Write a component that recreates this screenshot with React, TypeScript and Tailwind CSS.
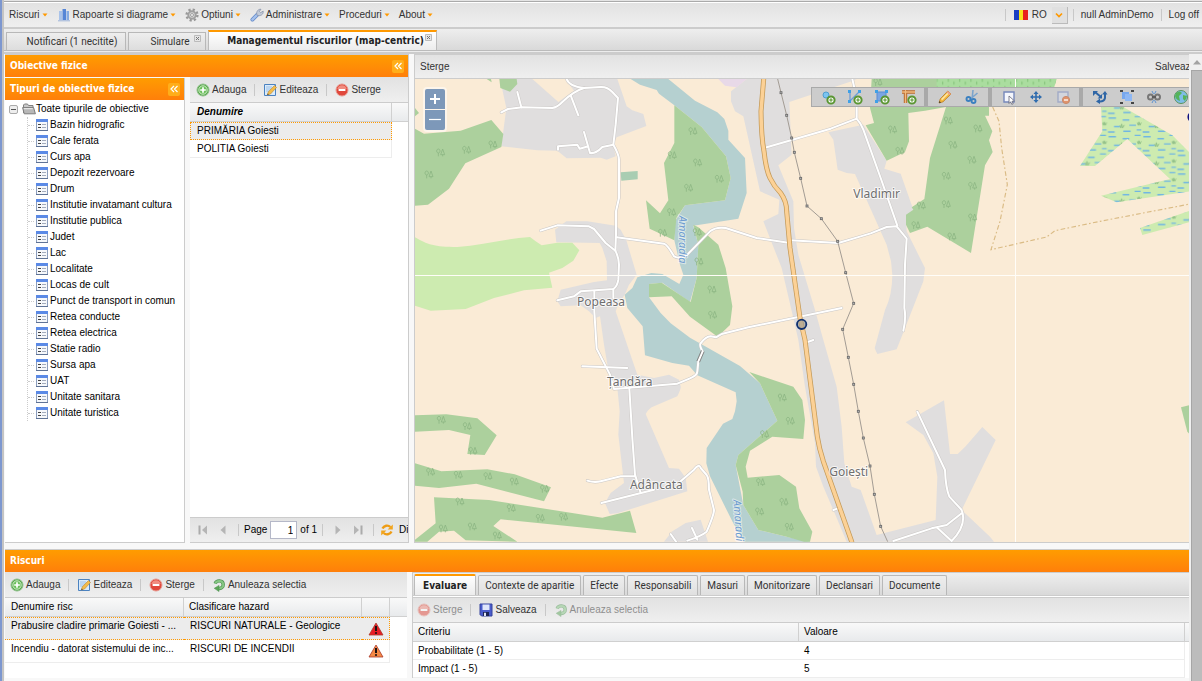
import { useState, type ReactNode } from 'react';

const TREE_ITEMS = [
  'Bazin hidrografic',
  'Cale ferata',
  'Curs apa',
  'Depozit rezervoare',
  'Drum',
  'Institutie invatamant cultura',
  'Institutie publica',
  'Judet',
  'Lac',
  'Localitate',
  'Locas de cult',
  'Punct de transport in comun',
  'Retea conducte',
  'Retea electrica',
  'Statie radio',
  'Sursa apa',
  'UAT',
  'Unitate sanitara',
  'Unitate turistica',
];

const DETAIL_TABS = [
  'Evaluare',
  'Contexte de aparitie',
  'Efecte',
  'Responsabili',
  'Masuri',
  'Monitorizare',
  'Declansari',
  'Documente',
];

const RISKS = [
  { name: 'Prabusire cladire primarie Goiesti - ...', hazard: 'RISCURI NATURALE - Geologice', color: '#e81c24' },
  { name: 'Incendiu - datorat sistemului de inc...', hazard: 'RISCURI DE INCENDII', color: '#f58a45' },
];

const CRITERIA = [
  { name: 'Probabilitate (1 - 5)', value: '4' },
  { name: 'Impact (1 - 5)', value: '5' },
];

/* ---------- icons ---------- */

function AddIcon() {
  return (
    <svg className="h-3.5 w-3.5" viewBox="0 0 14 14">
      <circle cx="7" cy="7" r="6" fill="#5bab4f" stroke="#8fbf8a" />
      <circle cx="7" cy="7" r="4.2" fill="#6cc05c" stroke="#e6f5e2" strokeWidth=".8" />
      <path d="M7 4.2v5.6M4.2 7h5.6" stroke="#fff" strokeWidth="1.7" />
    </svg>
  );
}

function RemoveIcon() {
  return (
    <svg className="h-3.5 w-3.5" viewBox="0 0 14 14">
      <circle cx="7" cy="7" r="6" fill="#e0483c" stroke="#e79a90" />
      <path d="M2.3 6a4.8 4.8 0 0 1 9.4 0z" fill="#f08d80" />
      <path d="M3.6 7h6.8" stroke="#fff" strokeWidth="2" />
    </svg>
  );
}

function EditIcon() {
  return (
    <svg className="h-3.5 w-3.5" viewBox="0 0 14 14">
      <path d="M1.5 1.5h11v11h-11z" fill="#d9eafa" stroke="#4b82c0" />
      <path d="M3 4h6M3 6h5M3 8h3" stroke="#9cc0e6" />
      <path d="M11.5 2.5 13.5 4.5 7.5 11l-3.2 1 1-3.2z" fill="#f4bc4a" stroke="#b58636" strokeWidth=".6" />
      <path d="m4.3 12 .5-1.5 1 1z" fill="#333" />
    </svg>
  );
}

function UndoIcon() {
  return (
    <svg className="h-3.5 w-3.5" viewBox="0 0 14 14">
      <path d="M3.2 5.5C4.5 2 10.8 1.8 11.2 6.3c.3 3-2.4 4.5-5.2 4.2" fill="none" stroke="#4c9150" strokeWidth="3.4" />
      <path d="M3.2 5.5C4.5 2 10.8 1.8 11.2 6.3c.3 3-2.4 4.5-5.2 4.2" fill="none" stroke="#86c784" strokeWidth="2" />
      <path d="M7 7.4v6.2L2.2 10.3z" fill="#5aa556" stroke="#4c9150" strokeWidth=".5" />
    </svg>
  );
}

function SaveIcon() {
  return (
    <svg className="h-3.5 w-3.5" viewBox="0 0 14 14">
      <path d="M1 1h12v12H2.5L1 11.5z" fill="#4a5ccc" stroke="#34439c" />
      <path d="M3.5 1.5h7V7h-7z" fill="#dfe6fb" />
      <path d="M4 9h6v4H4z" fill="#1c2454" />
      <path d="M5 9.8h2V13H5z" fill="#dfe4f5" />
    </svg>
  );
}

function FormIcon() {
  return (
    <svg className="h-3 w-3" viewBox="0 0 12 12">
      <path d="M.5.5h11v11H.5z" fill="#f6f8fb" stroke="#8b9dbd" />
      <path d="M0 0h12v3H0z" fill="#5b8ae6" />
      <path d="M0 11.5h12" stroke="#5f7396" />
      <path d="M2 5.5h3M2 8.5h3" stroke="#444" />
      <path d="M6 5.5h4M6 8.5h4" stroke="#a3acbd" />
    </svg>
  );
}

function FolderIcon() {
  return (
    <svg className="h-3 w-3.5" viewBox="0 0 14 12">
      <path d="M1.5 10V2l1-1h3l1 1.5H11V5" fill="#c9c9c9" stroke="#808080" />
      <path d="M.6 4.6h11l1.8 6.2H2.2z" fill="#b8b8b8" stroke="#7c7c7c" />
      <path d="M1.8 5.7h9" stroke="#f0f0f0" />
    </svg>
  );
}

function WarningIcon({ color }: { color: string }) {
  return (
    <svg className="mx-auto h-3.5 w-4" viewBox="0 0 16 14">
      <path d="M8 1 15 13H1z" fill={color} stroke="#a83a2c" strokeWidth=".8" strokeLinejoin="round" />
      <path d="M8 4v5" stroke="#1c1010" strokeWidth="2" />
      <circle cx="8" cy="11" r="1.1" fill="#1c1010" />
    </svg>
  );
}

function ChartIcon() {
  return (
    <svg className="h-3.5 w-3.5" viewBox="0 0 14 14">
      <path d="M2 3h3v9H2z" fill="#a9c3ea" />
      <path d="M5.5 1H9v11H5.5z" fill="#5686d6" />
      <path d="M9.5 3H12v9H9.5z" fill="#86abe2" />
      <path d="M1 12.8h12" stroke="#9db4da" />
    </svg>
  );
}

function GearIcon() {
  return (
    <svg className="h-3.5 w-3.5" viewBox="0 0 14 14">
      <circle cx="7" cy="7" r="5.4" fill="none" stroke="#989898" strokeWidth="2.4" strokeDasharray="2.2 2.04" />
      <circle cx="7" cy="7" r="3.7" fill="#d8d8d8" stroke="#a0a0a0" strokeWidth="2" />
      <circle cx="7" cy="7" r="1.5" fill="#f2f2f2" stroke="#888" strokeWidth=".7" />
    </svg>
  );
}

function WrenchIcon() {
  return (
    <svg className="h-3.5 w-3.5" viewBox="0 0 14 14">
      <path d="M2.4 11.6 7.6 6.4" stroke="#5f86c6" strokeWidth="3.8" strokeLinecap="round" />
      <path d="M2.4 11.6 7.6 6.4" stroke="#a4c0ec" strokeWidth="2.4" strokeLinecap="round" />
      <path d="M7 7.2C5.8 3.8 8 1 11 1.2L9.4 3.4l1.2 1.3 2.6-1.6c.4 3.2-2.6 5.6-6.2 4.1z" fill="#c3cbd8" stroke="#7f8da6" strokeWidth=".7" />
    </svg>
  );
}

function RefreshIcon() {
  return (
    <svg className="h-3.5 w-3.5" viewBox="0 0 14 14">
      <path d="M2.5 5.6C4 2.4 8 1.6 10.4 4M11.5 8.4C10 11.6 6 12.4 3.6 10" fill="none" stroke="#ee9c14" strokeWidth="2.4" />
      <path d="M12.8 1.6v5H7.6zM1.2 12.4v-5h5.2z" fill="#f2a51e" />
    </svg>
  );
}

function Caret() {
  return (
    <svg className="h-1 w-1.5" viewBox="0 0 6 4">
      <path d="M.5.5h5L3 3.5z" fill="#f90" />
    </svg>
  );
}

function PageArrow({ flip, bar }: { flip?: boolean; bar?: boolean }) {
  return (
    <svg className={flip ? 'h-2.5 w-2.5 rotate-180' : 'h-2.5 w-2.5'} viewBox="0 0 10 10">
      <path d="M7.5.5v9L2.5 5z" fill="#b5b5b5" transform={bar ? 'translate(1.5 0)' : undefined} />
      {bar && <path d="M1.5.5v9" stroke="#ababab" strokeWidth="2" />}
    </svg>
  );
}

/* ---------- small building blocks ---------- */

function Separator() {
  return <span className="h-3 w-px shrink-0 bg-[#c8c8c8]" />;
}

function ToolButton({ icon, children, disabled }: { icon?: ReactNode; children: ReactNode; disabled?: boolean }) {
  return (
    <button disabled={disabled} className="flex items-center gap-0.5 whitespace-nowrap disabled:opacity-50">
      {icon}
      {children}
    </button>
  );
}

function Bar({ children, className = '' }: { children: ReactNode; className?: string }) {
  return (
    <div className={`flex h-[26px] shrink-0 items-center overflow-hidden bg-linear-to-b from-[#e2e2e2] to-[#efefef] text-[#333] ${className}`}>
      {children}
    </div>
  );
}

function OrangeHeader({ title, collapsible = true }: { title: string; collapsible?: boolean }) {
  return (
    <div className="flex h-[22px] shrink-0 items-center justify-between bg-linear-to-b from-[#ff9c00] to-[#ff7f0a] pr-1 pl-[5px] font-['DejaVu_Sans_Condensed','DejaVu_Sans',sans-serif] text-[10px] font-bold text-white">
      <h2>{title}</h2>
      {collapsible && (
        <button aria-label="Restrange" className="flex h-[13px] w-3 items-center justify-center rounded-xs bg-[#ffae1a]">
          <svg className="h-2 w-2" viewBox="0 0 8 8">
            <path d="M4 1 1 4l3 3M7.5 1l-3 3 3 3" fill="none" stroke="#fff" strokeWidth="1.2" />
          </svg>
        </button>
      )}
    </div>
  );
}

function MenuItem({ icon, label }: { icon?: ReactNode; label: string }) {
  return (
    <button className="flex items-center gap-0.5 whitespace-nowrap">
      {icon}
      {label}
      <Caret />
    </button>
  );
}

function MainTab({ label, active, closable, className = '' }: { label: string; active?: boolean; closable?: boolean; className?: string }) {
  return (
    <button
      role="tab"
      aria-selected={!!active}
      className={`relative flex items-center justify-center whitespace-nowrap border-x border-t ${
        active
          ? "h-5 border-[#bbb] border-t-2 border-t-[#f90] bg-linear-to-b from-white to-[#ececec] font-['DejaVu_Sans_Condensed','DejaVu_Sans',sans-serif] font-bold text-[#222]"
          : 'h-[18px] border-[#b8b8b8] bg-linear-to-b from-[#eee] to-[#ddd] text-[#333]'
      } ${className}`}
    >
      {label}
      {closable && (
        <svg className="absolute top-0.5 right-1 h-[7px] w-[7px]" viewBox="0 0 7 7">
          <path d="M.5.5h6v6h-6z" fill="#e6e6e6" stroke="#bbb" />
          <path d="m2 2 3 3M5 2 2 5" stroke="#777" />
        </svg>
      )}
    </button>
  );
}

/* ---------- map ---------- */

const TREES = [
  [80, 223], [158, 215], [237, 199], [45, 289], [837, 159], [775, 231], [851, 253], [824, 329], [916, 302], [773, 402],
  [746, 464], [850, 462], [894, 634], [896, 710], [855, 550], [1105, 958], [1129, 1028], [1052, 1068], [1040, 1212],
  [1037, 1300], [1110, 1271], [1126, 1346], [1436, 154], [1458, 218], [1603, 127], [1617, 200], [1597, 293], [1597, 378],
  [1522, 382], [1506, 441], [1614, 475], [1692, 151], [1674, 245], [1676, 323], [1676, 418], [82, 1025], [160, 1044],
  [177, 1118], [50, 1181], [133, 1190], [222, 1194], [301, 1210], [392, 1232], [138, 1270], [292, 1290], [379, 1319],
  [449, 1316], [88, 1351], [175, 1345], [250, 1372], [1392, 12],
];

const PYLONS = [
  [1101, 44], [1118, 112], [1133, 180], [1141, 223], [1160, 301], [1179, 384], [1222, 422], [1271, 490], [1295, 584],
  [1319, 676], [1286, 754], [1303, 838], [1319, 919], [1333, 1000], [1348, 1080], [1368, 1164], [1381, 1249], [1400, 1345],
];

const ROADS = [
  'M262 103 282 93 325 88 415 90Q430 88 445 72 478 40 510 30L560 27Q580 26 595 42L612 60 605 140 598 200 Q615 230 615 245L615 360 606 400 606 470 604 518Q615 540 615 560L613 605Q610 625 598 633L500 640 480 655 430 667',
  'M458 3Q465 25 510 30M310 42 322 88M470 52 493 112M432 215V205L490 200 497 212 523 205M510 162 528 225Q545 228 565 207L598 200',
  'M380 458 430 442 525 445 540 453 575 495 604 518M608 478 750 497Q760 500 780 535 800 545 820 530L888 460Q905 446 935 450L1028 480 1123 494',
  'M1128 487 1273 495 1330 478 1370 466 1418 447 1448 445 1478 482 1473 560 1471 690Q1477 720 1468 758',
  'M1058 208 1250 152 1328 122M1315 3 1328 60V122Q1340 135 1348 155L1400 300 1450 443',
  'M541 640V700L548 812 588 890 600 933 700 925 790 917 828 901 Q850 893 850 880L853 851 866 821Q855 800 860 796 875 776 890 775L906 778 923 768 1003 748 1283 690',
  'M505 865 640 870M646 931 655 1080 663 1190 680 1245M520 1208Q540 1215 560 1210L620 1195H663M562 1275 720 1235',
  'M800 1210 840 1175Q855 1155 860 1170L878 1191Q885 1200 885 1235L900 1296Q900 1310 878 1361 860 1375 820 1388M770 1368 786 1391M834 1350 850 1385',
  'M1510 1001 1593 1176Q1595 1230 1606 1256L1643 1296Q1660 1340 1613 1389L1568 1348M1438 1389 1553 1351 1598 1341 1643 1306',
  'M1176 794 1198 786M1258 1296 1270 1292M598 633V660',
];

const MAIN_ROAD =
  'M1049 3 1041 100Q1042 180 1050 220 1056 275 1068 300 1080 325 1100 345 1118 370 1118 400L1128 510 1158 720 1173 786 1210 1076Q1215 1110 1228 1150L1313 1391';

function RegionMap() {
  return (
    <svg className="absolute inset-0 h-full w-full" viewBox="3 3 2322 1389" preserveAspectRatio="xMinYMin slice" role="img" aria-label="Harta">
      <defs>
        <pattern id="marsh" width="104" height="56" patternUnits="userSpaceOnUse">
          <path d="M4 8h22M46 14h20M82 4h18M20 34h18M66 30h20M2 50h20M48 48h22M88 44h14" stroke="#6fb5e4" strokeWidth="4" />
          <path d="M38 30l3 8 2-12 3 12 5-9M90 22l3 8 2-10 3 10 4-8" fill="none" stroke="#86b880" strokeWidth="2.5" />
        </pattern>
        <pattern id="ticks" width="34" height="22" patternUnits="userSpaceOnUse">
          <path d="M5 2v10M22 10v10" stroke="#82c178" strokeWidth="3" />
        </pattern>
      </defs>
      <path d="M0 0H4000V3000H0z" fill="#faebd6" />

      {/* built-up areas */}
      <g fill="#e0dede">
        <path d="M258 3 277 90 262 205 370 217 430 218 458 241 560 239 578 245 605 235 598 200 608 178 697 144 688 108 655 97 638 85 610 3z" />
        <path d="M423 455 427 493 557 495 565 510 578 550 579 607 540 612 440 635 430 670 440 685 500 682 525 700 545 720 558 715 570 800 582 870 610 930 617 1000 613 1070 630 1215 590 1245 573 1275 587 1308 610 1306 820 1240 815 1200 795 1172 765 1170 695 1008Q705 990 720 985L790 955Q802 930 800 925L795 905 765 890 720 900 670 890 605 700 612 680 632 650 645 620 668 590 637 487 620 455 605 443 520 430H457z" />
        <path d="M750 1391 775 1360 815 1335 860 1325 882 1391z" />
        <path d="M998 3 951 40V70L963 100 988 115 1038 340 1096 365 1093 408 1048 430 1103 570 1138 720 1153 786 1173 926 1203 1096 1206 1166 1228 1226 1258 1296 1298 1391H1740L1728 1376 1643 1296 1745 1086 1705 1047 1655 1105 1631 1128H1608L1590 967 1475 1033 1528 1071 1558 1126 1570 1196 1565 1326 1388 1371 1340 1236 1313 1226 1291 1156 1283 1046 1268 926 1228 786 1203 696 1153 530 1140 450 1138 370 1093 262 1133 230 1126 72 1313 10 1328 3z" />
        <path d="M1243 163 1348 140 1418 248 1411 272 1460 287 1498 395 1476 415 1478 460 1533 570 1528 610 1485 720 1448 814 1390 828 1382 811 1413 696Q1435 650 1435 590L1431 550 1418 500 1323 288 1298 285 1271 275 1258 185z" />
      </g>
      <path d="M355 3 433 72 480 38 455 3z" fill="#faebd6" />
      <path d="M913 3 933 23 968 28 998 3z" fill="#e8d9e8" />
      <path d="M620 283 671 279V304L622 308z" fill="#a9cdb2" />

      {/* meadow, water, woods */}
      <path d="M3 478C40 500 60 507 130 507 200 502 270 482 348 477L365 490 383 502 430 494H475L496 517 478 548 445 570 405 584 415 629 330 637 240 660 155 693 50 698 3 683z" fill="#cdebb0" />
      <path d="M650 3 678 20 728 36 735 47 781 82 863 147 936 235 950 300 933 367 813 382 783 430 781 487 798 560 808 590 796 618 745 588 712 585 670 598 655 630 632 650 640 690 686 745 693 832 775 855 825 863 850 892 965 943 968 970 963 1000 955 1023 927 1037 878 1110 877 1156 888 1195 935 1290 958 1336 990 1391H1190L1118 1376 1033 1356 988 1281 965 1161 973 1131 1090 1028 1038 916 978 864 828 779 770 736 740 705 705 658V618L745 614 828 672 848 600 853 500 838 443 973 422 998 345 993 240 943 185V158L931 123 910 103 843 68 763 3z" fill="#b5d0d0" />
      <g fill="#acd09d">
        <path d="M256 3 259 30 288 41 310 18 308 3zM218 3 233 13 231 3zM3 90 15 105 3 115z" />
        <path d="M3 152 30 167 140 158 232 126 268 168 262 207 154 256 105 332 42 380 3 383z" />
        <path d="M781 82 863 147 936 235 950 300 933 367 813 382 787 420 781 487 707 452 696 367 738 406 763 367 750 255 781 195z" />
        <path d="M838 440 853 448 913 500 935 570 955 685 948 741 911 776 828 716 773 655 705 658V618L743 614 830 672 848 600 853 500z" />
        <path d="M1006 882 1138 926 1165 966 1173 1026 1168 1083 1075 1076 1008 1118 995 1166 1001 1199 1096 1191 1146 1226 1156 1291 1195 1361 1188 1391H1170L1118 1376 1033 1356 988 1281 986 1241 965 1161 973 1131 1090 1028 1038 916z" />
        <path d="M1373 3 1368 90 1380 135 1355 142 1418 248 1473 222 1485 190 1483 105 1533 98 1596 87 1548 240 1531 363 1493 388 1498 395 1476 410V440L1488 465 1540 446 1671 525 1713 262 1736 222 1725 187 1735 160 1713 113H1725V3z" />
        <path d="M3 1012 97 1009 190 1021 248 1072 212 1131 160 1128 169 1071 105 1056 3 1061zM3 1156 82 1180 220 1174 302 1189 411 1228 390 1270 187 1217 75 1230 3 1223z" />
        <path d="M60 1258 225 1266 565 1319 648 1298 667 1365 260 1324 238 1344 310 1391 155 1387 120 1358 75 1361 40 1391H3V1385L65 1336z" />
        <path d="M2301 988 2328 981V1070L2320 1061z" />
      </g>
      <path d="M1568 3H1928L1920 30H1568z" fill="#aadd9f" />
      <path d="M1568 3H1928L1920 30H1568z" fill="url(#ticks)" />
      {['#cdebb0', 'url(#marsh)'].map((fill) => (
        <path
          key={fill}
          fill={fill}
          d="M2061 87H2128L2275 172 2328 225V340L2108 373 2061 353 2268 303 2140 183 2043 264H1998L2065 160zM2178 450 2328 398V432L2185 471z"
        />
      ))}
      <g fill="none" stroke="#8cb583" strokeWidth="2.4">
        {TREES.map(([x, y]) => (
          <path key={`${x}-${y}`} transform={`translate(${x} ${y})`} d="M-7 12V2M-7 2a5 6 0 1 1 .1 0M6 12V7M0 7 6-10 12 7z" />
        ))}
      </g>

      <path d="M1736 87 1755 130 1763 210 1780 320 1758 430 1731 515 1898 477 1923 458 2058 430 2328 378" fill="none" stroke="#dabb85" strokeWidth="3.5" strokeDasharray="14 7 5 7" />

      {/* roads */}
      <g fill="none" strokeLinejoin="round" strokeLinecap="round">
        {ROADS.map((d) => <path key={d} d={d} stroke="#cbc8c6" strokeWidth="9" />)}
        {ROADS.map((d) => <path key={d} d={d} stroke="#fff" strokeWidth="6" />)}
        <path d="M849 848 862 818M857 852 870 822" stroke="#777" strokeWidth="2.5" />
        <path d={MAIN_ROAD} stroke="#c49a58" strokeWidth="15" />
        <path d={MAIN_ROAD} stroke="#fcd196" strokeWidth="10.5" />
      </g>
      <polyline points={`1091,3 ${PYLONS.map((p) => p.join(',')).join(' ')} 1421,1391`} fill="none" stroke="#a39c94" strokeWidth="3" />
      {PYLONS.map(([x, y]) => (
        <rect key={y} x={x - 3} y={y - 3} width="6" height="6" fill="#bbb" stroke="#6b6b6b" strokeWidth="2.5" />
      ))}

      {/* tile seams */}
      <path d="M3 592.5H2400M1804.5 3V1400" stroke="#fffdf8" strokeWidth="3" />

      <g fontFamily="'Noto Sans', sans-serif" fontSize="36" fill="#6f6f6f" stroke="#fff" strokeWidth="6" strokeOpacity=".75" strokeLinejoin="round" paintOrder="stroke" textAnchor="middle">
        <text x="561" y="684">Popeasa</text>
        <text x="647" y="923">Țandăra</text>
        <text x="727" y="1232">Adâncata</text>
        <text x="1304" y="1195">Goiești</text>
        <text x="1388" y="361">Vladimir</text>
        <g fill="#6d9bd0" fontStyle="italic" fontSize="33" textAnchor="start" strokeOpacity=".5">
          <text transform="translate(795 413) rotate(90)">Amaradia</text>
          <text transform="translate(958 1266) rotate(86)">Amaradia</text>
        </g>
      </g>

      <circle cx="1163" cy="739" r="14" fill="#9a9a94" fillOpacity=".65" stroke="#10306e" strokeWidth="5.5" />
      <circle cx="2337" cy="117" r="14" fill="#9a9a94" stroke="#10107e" strokeWidth="5.5" />
    </svg>
  );
}

const plus = (
  <>
    <circle cx="11" cy="11" r="3.6" fill="#fff" stroke="#5a9632" strokeWidth="2" />
    <path d="M11 9.2v3.6M9.2 11h3.6" stroke="#5a9632" strokeWidth="1.2" />
  </>
);

const MAP_TOOLS: { label: string; icon: ReactNode }[][] = [
  [
    { label: 'Adauga punct', icon: <><circle cx="6" cy="6" r="3" fill="#7cc4f0" stroke="#4f9ed0" />{plus}</> },
    {
      label: 'Adauga linie',
      icon: (
        <>
          <path d="M3 3v9l9-9" fill="none" stroke="#6c9cd8" strokeWidth="1.3" />
          <path d="M1 1h3v3H1zM1 11h3v3H1zM11 1h3v3h-3z" fill="#3fa0e6" />
          {plus}
        </>
      ),
    },
    {
      label: 'Adauga poligon',
      icon: (
        <>
          <path d="M3 3h9v9H3z" fill="#7aa5e2" stroke="#5b8cd4" />
          <path d="M1 1h3v3H1zM1 11h3v3H1zM11 1h3v3h-3z" fill="#3fa0e6" />
          {plus}
        </>
      ),
    },
    {
      label: 'Masoara',
      icon: (
        <>
          <path d="M1 3h13M4.5 1v13" stroke="#b8692c" strokeWidth="3.4" />
          <path d="M1 3h13M4.5 1v13" stroke="#f0bb80" strokeWidth="1.4" />
          {plus}
        </>
      ),
    },
  ],
  [
    {
      label: 'Modifica',
      icon: (
        <>
          <path d="m2 14 1.2-4L10.800 2 14 5l-8 7.800z" fill="#f6b93f" stroke="#b87a20" strokeWidth=".8" />
          <path d="m4.6 10.6 7.4-7.4" stroke="#fde6a4" strokeWidth="1.5" />
          <path d="M10.8 2 14 5l-1.3 1.3-3.2-3z" fill="#e99f8c" />
          <path d="m2 14 .6-2 1.4 1.4z" fill="#333" />
        </>
      ),
    },
    {
      label: 'Taie',
      icon: (
        <>
          <path d="m9 1-.8 8M13.5 4 7 9.5" stroke="#7ba4cc" strokeWidth="1.6" />
          <circle cx="4.5" cy="10" r="2" fill="none" stroke="#3b80c0" strokeWidth="1.9" />
          <circle cx="9.5" cy="12" r="2" fill="none" stroke="#3b80c0" strokeWidth="1.9" />
        </>
      ),
    },
  ],
  [
    {
      label: 'Selecteaza',
      icon: (
        <>
          <path d="M3 3h10v10H3z" fill="#f4f6fc" stroke="#7688bb" strokeWidth="1.4" />
          <path d="m8 7 5.5 5-2.5.3 1.2 2.4-1.4.6-1.2-2.5L8 14.5z" fill="#fff" stroke="#667" strokeWidth=".8" />
        </>
      ),
    },
    {
      label: 'Muta',
      icon: (
        <>
          <path d="M8 4v8M4 8h8" stroke="#2f6cae" strokeWidth="1.6" />
          <path d="M8 2l2.5 3h-5zM8 14l2.5-3h-5zM2 8l3-2.5v5zM14 8l-3-2.5v5z" fill="#2f6cae" />
        </>
      ),
    },
    {
      label: 'Sterge selectia',
      icon: (
        <>
          <path d="M3 3h10v10H3z" fill="#d3d5dc" stroke="#a2abc6" strokeWidth="1.4" />
          <circle cx="11" cy="11" r="3.6" fill="#e0936c" stroke="#c98a6c" />
          <path d="M9 11h4" stroke="#fff" strokeWidth="1.3" />
        </>
      ),
    },
  ],
  [
    {
      label: 'Roteste',
      icon: (
        <>
          <path d="m3 3 6 5M13 4v5q-1 4-6 3.5" fill="none" stroke="#2f66a6" strokeWidth="2" />
          <path d="M1 2h5L1 7zM10 9.5V5L5.5 9.5zM10 5.5 13 2l2.5 3.5zM8 9.5V15l-4-2.500z" fill="#2f66a6" />
        </>
      ),
    },
    {
      label: 'Redimensioneaza',
      icon: (
        <>
          <path d="M3 3h7v7H3z" fill="#78a8ee" />
          <path d="M6 5h7v7H6z" fill="#8fb8f4" />
          <path d="M1 1h3v2H1zM12 1h3v2h-3zM1 13h3v2H1zM12 13h3v2h-3z" fill="#444" />
        </>
      ),
    },
    {
      label: 'Uneste',
      icon: (
        <>
          <circle cx="4.5" cy="8" r="2.5" fill="none" stroke="#777" strokeWidth="2" />
          <circle cx="11.5" cy="8" r="2.5" fill="none" stroke="#777" strokeWidth="2" />
          <path d="M6 8h4" stroke="#555" strokeWidth="1.5" />
          <path d="M6 2l1.5 3M10 2 8.5 5M6 14l1.5-3M10 14l-1.5-3" stroke="#5f93d0" />
        </>
      ),
    },
    {
      label: 'Harta de baza',
      icon: (
        <>
          <circle cx="8" cy="8" r="6.5" fill="#7fbde8" stroke="#5a955c" />
          <path d="M3 4q4-3 6 0l-3 3 1 5q-4-1-5-5zM10 6l4 1-2 5-2-2z" fill="#55b45a" />
        </>
      ),
    },
  ],
];

function MapPanel() {
  return (
    <section className="flex min-w-0 flex-1 flex-col border-y border-l border-[#ccc]">
      <Bar className="h-6! justify-between border-b border-[#ccc] pl-[5px]">
        <ToolButton>Sterge</ToolButton>
        <div className="flex w-[34px] overflow-hidden">
          <ToolButton>Salveaza</ToolButton>
        </div>
      </Bar>
      <div className="relative min-h-0 flex-1 overflow-hidden">
        <RegionMap />
        <div className="absolute top-2 left-2 flex flex-col gap-px rounded-sm bg-white/50 p-0.5">
          <button aria-label="Mareste" className="flex h-5 w-5 items-center justify-center rounded-t-xs bg-[#7d98b9]">
            <svg className="h-3 w-3" viewBox="0 0 12 12"><path d="M6 1v10M1 6h10" stroke="#fff" strokeWidth="2" /></svg>
          </button>
          <button aria-label="Micsoreaza" className="flex h-5 w-5 items-center justify-center rounded-b-xs bg-[#7d98b9]">
            <svg className="h-3 w-3" viewBox="0 0 12 12"><path d="M0 5.5h12" stroke="#fff" strokeWidth="1.2" /></svg>
          </button>
        </div>
        <div className="absolute top-2 right-0 flex w-[378px] overflow-hidden border border-r-0 border-[#a9a9a9] bg-[#ccc]">
          {MAP_TOOLS.map((group, i) => (
            <div key={i} className={`flex shrink-0 ${i === 0 ? 'px-0.5' : 'px-[3px]'} ${i < MAP_TOOLS.length - 1 ? 'border-r-4 border-[#a9a9a9]' : ''}`}>
              {group.map((tool) => (
                <button key={tool.label} aria-label={tool.label} className="flex h-[18px] w-[27px] items-center justify-center">
                  <svg className="h-4 w-4" viewBox="0 0 16 16">{tool.icon}</svg>
                </button>
              ))}
            </div>
          ))}
        </div>
      </div>
    </section>
  );
}

/* ---------- panels ---------- */

const TH = 'border-b border-[#d0d0d0] bg-linear-to-b from-[#f9f9f9] to-[#e8eaec] text-left font-normal';

function ObjectTypesTree() {
  return (
    <div className="mt-px flex w-[180px] shrink-0 flex-col border-r border-b border-[#ccc] bg-white">
      <OrangeHeader title="Tipuri de obiective fizice" />
      <div className="overflow-hidden pt-px text-black">
        <div className="flex h-4 items-center pl-1">
          <span className="mr-1 flex h-[9px] w-[9px] items-center justify-center rounded-xs border border-[#aaa] bg-[#eee]">
            <span className="h-px w-[5px] bg-[#555]" />
          </span>
          <FolderIcon />
          <span>Toate tipurile de obiective</span>
        </div>
        <ul className="ml-[22px] border-l border-dotted border-[#ccc]">
          {TREE_ITEMS.map((item) => (
            <li key={item} className="flex h-4 items-center gap-0.5 whitespace-nowrap">
              <span className="w-1.5 border-t border-dotted border-[#ccc]" />
              <FormIcon />
              {item}
            </li>
          ))}
        </ul>
      </div>
    </div>
  );
}

function ObjectsGrid() {
  const [page, setPage] = useState('1');
  return (
    <div className="flex min-w-0 flex-1 flex-col bg-white">
      <Bar className="gap-2 border-b border-[#ccc] pl-1.5">
        <ToolButton icon={<AddIcon />}>Adauga</ToolButton>
        <Separator />
        <ToolButton icon={<EditIcon />}>Editeaza</ToolButton>
        <Separator />
        <ToolButton icon={<RemoveIcon />}>Sterge</ToolButton>
      </Bar>
      <table className="w-full table-fixed border-separate border-spacing-0 text-black">
        <colgroup>
          <col />
          <col className="w-4" />
        </colgroup>
        <thead>
          <tr className="h-[19px]">
            <th className={`${TH} border-r pl-[7px] font-bold! italic`}>Denumire</th>
            <td className={TH} />
          </tr>
        </thead>
        <tbody>
          <tr className="h-[18px]">
            <td className="border border-dotted border-[#f90] bg-[#ececec] pl-1.5">PRIMĂRIA Goiesti</td>
            <td />
          </tr>
          <tr className="h-[18px]">
            <td className="border-r border-b border-[#ededed] pl-[7px]">POLITIA Goiesti</td>
            <td />
          </tr>
        </tbody>
      </table>
      <Bar className="mt-auto gap-2.5 border-y border-[#ccc] pl-2">
        <button aria-label="Prima pagina"><PageArrow bar /></button>
        <button aria-label="Pagina anterioara"><PageArrow /></button>
        <div className="flex items-center gap-[5px] text-black">
          <Separator />
          <label htmlFor="page">Page</label>
          <input
            id="page"
            value={page}
            onChange={(e) => setPage(e.target.value)}
            className="-ml-0.5 h-[18px] w-[27px] border border-[#b5b8c8] bg-white pr-[3px] text-right"
          />
          <span className="-ml-0.5 whitespace-nowrap">of 1</span>
          <Separator />
        </div>
        <button aria-label="Pagina urmatoare"><PageArrow flip /></button>
        <button aria-label="Ultima pagina"><PageArrow flip bar /></button>
        <Separator />
        <div className="-ml-1 flex items-center gap-[5px] text-black">
          <button aria-label="Reincarca"><RefreshIcon /></button>
          <span className="whitespace-nowrap">Displaying 1 - 2 of 2</span>
        </div>
      </Bar>
    </div>
  );
}

function RisksPanel() {
  return (
    <div className="w-[402px] shrink-0 bg-white">
      <Bar className="gap-2 border-b border-[#ccc] pl-[5px]">
        <ToolButton icon={<AddIcon />}>Adauga</ToolButton>
        <Separator />
        <ToolButton icon={<EditIcon />}>Editeaza</ToolButton>
        <Separator />
        <ToolButton icon={<RemoveIcon />}>Sterge</ToolButton>
        <Separator />
        <ToolButton icon={<UndoIcon />}>Anuleaza selectia</ToolButton>
      </Bar>
      <table className="w-full table-fixed border-separate border-spacing-0 text-black">
        <colgroup>
          <col className="w-[179px]" />
          <col />
          <col className="w-[28px]" />
          <col className="w-[17px]" />
        </colgroup>
        <thead>
          <tr className="h-[19px]">
            <th className={`${TH} border-r pl-1.5`}>Denumire risc</th>
            <th className={`${TH} border-r pl-[5px]`}>Clasificare hazard</th>
            <td className={`${TH} border-r`} />
            <td className={TH} />
          </tr>
        </thead>
        <tbody>
          {RISKS.map((risk, i) => {
            const cell = i === 0 ? 'border-y border-dotted border-[#f90] bg-[#ececec]' : 'border-b border-[#ededed]';
            return (
              <tr key={risk.name} className="h-[23px]">
                <td className={`${cell} pb-[5px] pl-1.5 whitespace-nowrap`}>{risk.name}</td>
                <td className={`${cell} pb-[5px] pl-1.5 whitespace-nowrap`}>{risk.hazard}</td>
                <td className={`${cell} border-r`}><WarningIcon color={risk.color} /></td>
                <td />
              </tr>
            );
          })}
        </tbody>
      </table>
    </div>
  );
}

function RiskDetails() {
  const [tab, setTab] = useState('Evaluare');
  return (
    <div className="min-w-0 flex-1 overflow-hidden border-t border-l border-[#ccc] bg-white">
      <div role="tablist" className="flex h-[23px] items-end gap-0.5 overflow-hidden border-b border-[#ccc] bg-linear-to-b from-[#eee] to-[#d9d9d9] pl-px font-[Roboto,sans-serif]">
        {DETAIL_TABS.map((name) => (
          <button
            key={name}
            role="tab"
            aria-selected={name === tab}
            onClick={() => setTab(name)}
            className={`flex items-center rounded-t-xs border-x border-t whitespace-nowrap ${
              name === tab
                ? "h-[21px] border-[#bbb] border-t-2 border-t-[#f90] bg-linear-to-b from-white to-[#ececec] px-2 font-['DejaVu_Sans_Condensed','DejaVu_Sans',sans-serif] font-bold text-[#222]"
                : 'h-5 border-[#b8b8b8] bg-linear-to-b from-[#eee] to-[#e0e0e0] px-1.5 text-[#333]'
            }`}
          >
            {name}
          </button>
        ))}
      </div>
      <Bar className="mt-px gap-2 border-y border-[#ccc] pl-1">
        <ToolButton icon={<RemoveIcon />} disabled>Sterge</ToolButton>
        <Separator />
        <ToolButton icon={<SaveIcon />}>Salveaza</ToolButton>
        <Separator />
        <ToolButton icon={<UndoIcon />} disabled>Anuleaza selectia</ToolButton>
      </Bar>
      <table className="w-full table-fixed border-separate border-spacing-0 text-black">
        <thead>
          <tr className="h-[19px]">
            <th className={`${TH} border-r pl-[5px]`}>Criteriu</th>
            <th className={`${TH} border-r pl-[5px]`}>Valoare</th>
            <td className={`${TH} w-1`} />
          </tr>
        </thead>
        <tbody>
          {CRITERIA.map((c) => (
            <tr key={c.name} className="h-[18px]">
              <td className="border-b border-[#ededed] pl-[5px]">{c.name}</td>
              <td className="border-r border-b border-[#ededed] pl-[5px]">{c.value}</td>
              <td />
            </tr>
          ))}
        </tbody>
      </table>
    </div>
  );
}

function TopMenu() {
  return (
    <header className="flex h-[26px] shrink-0 items-center border-b-2 border-[#ccc] bg-linear-to-b from-[#e2e2e2] to-[#efefef] pl-[5px] text-[#333]">
      <nav className="flex items-center gap-[9px]">
        <MenuItem label="Riscuri" />
        <MenuItem icon={<ChartIcon />} label="Rapoarte si diagrame" />
        <MenuItem icon={<GearIcon />} label="Optiuni" />
        <MenuItem icon={<WrenchIcon />} label="Administrare" />
        <MenuItem label="Proceduri" />
        <MenuItem label="About" />
      </nav>
      <div className="ml-auto flex items-center">
        <Separator />
        <svg className="mr-1 ml-2 h-2.5 w-3.5" viewBox="0 0 14 10">
          <path d="M0 0h5v10H0z" fill="#1a3fc4" />
          <path d="M5 0h4v10H5z" fill="#f8e11c" />
          <path d="M9 0h5v10H9z" fill="#e8201c" />
        </svg>
        <span>RO</span>
        <button aria-label="Limba" className="mr-[5px] ml-[5px] flex h-[17px] w-4 items-center justify-center border-r border-b border-[#bbb] bg-[#e0e0e0]">
          <svg className="h-2 w-2" viewBox="0 0 8 8"><path d="m1 2.5 3 3 3-3" fill="none" stroke="#f90" strokeWidth="1.7" /></svg>
        </button>
        <Separator />
        <span className="mx-[7px]">null AdminDemo</span>
        <Separator />
        <a href="#logoff" className="mr-[3px] ml-[7px]">Log off</a>
      </div>
    </header>
  );
}

export default function App() {
  return (
    <div className="flex h-screen overflow-hidden bg-[#f8f8f8] font-['Liberation_Sans',Arial,sans-serif] text-[10px] leading-[14px]">
      <div className="w-1 shrink-0 border-r-2 border-l-2 border-l-[#7d97cf] border-r-[#c4c4c4]" />
      <div className="flex min-w-0 flex-1 flex-col">
        <div className="h-[3px] shrink-0 border-t border-b border-t-[#e4e4e4] border-b-white bg-[#aaa]" />
        <TopMenu />
        <div className="flex h-[25px] shrink-0 flex-col border-b-2 border-[#ccc] bg-[#ececec]">
          <div role="tablist" className="flex h-[22px] items-end gap-0.5 border-b border-[#bbb] bg-linear-to-b from-[#eee] to-[#d9d9d9] pl-0.5 font-[Roboto,sans-serif]">
            <MainTab label="Notificari (1 necitite)" className="w-[120px] pl-3" />
            <MainTab label="Simulare" closable className="w-[78px] pl-1.5" />
            <MainTab label="Managementul riscurilor (map-centric)" active closable className="w-[229px] pl-1.5" />
          </div>
        </div>
        <div className="flex min-h-0 flex-1">
          <main className="flex min-w-0 flex-1 flex-col gap-1.5 overflow-hidden pl-px">
            <div className="flex min-h-0 flex-1 gap-[5px]">
              <section className="flex w-[404px] shrink-0 flex-col border-t border-r border-[#ccc]">
                <OrangeHeader title="Obiective fizice" />
                <div className="flex min-h-0 flex-1 gap-[5px]">
                  <ObjectTypesTree />
                  <ObjectsGrid />
                </div>
              </section>
              <MapPanel />
            </div>
            <section className="shrink-0 border-t border-[#ccc] pb-[3px]">
              <OrangeHeader title="Riscuri" collapsible={false} />
              <div className="flex gap-[5px]">
                <RisksPanel />
                <RiskDetails />
              </div>
            </section>
          </main>
          <div className="flex w-[13px] shrink-0 flex-col border-l-2 border-[#f0f0f0]">
            <div className="flex h-4 items-center justify-center bg-[#f0f0f0]">
              <svg className="h-1.5 w-2" viewBox="0 0 8 6"><path d="M4 1 8 5.5H0z" fill="#a3a3a3" /></svg>
            </div>
            <div className="flex-1 border-t border-l border-[#a6a6a6] bg-[#bcbcbc]" />
          </div>
        </div>
      </div>
    </div>
  );
}
